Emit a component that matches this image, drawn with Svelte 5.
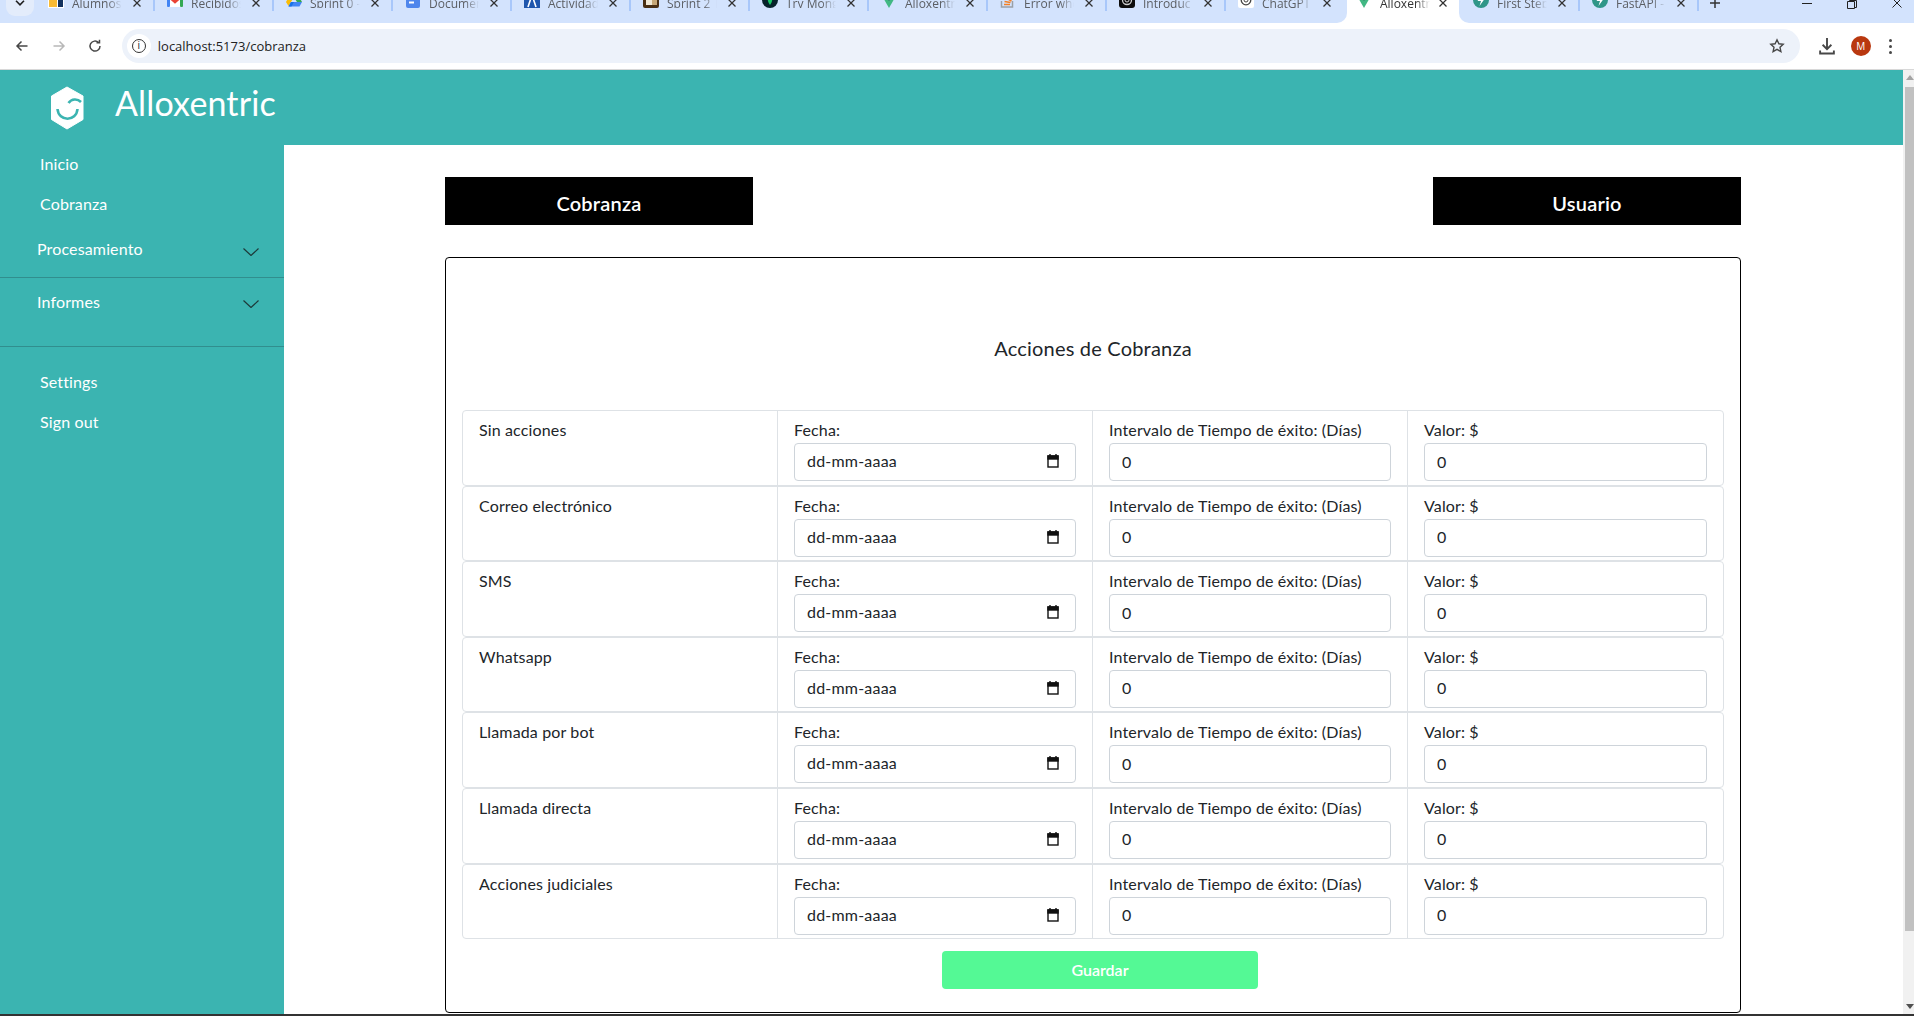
<script lang="ts">
	const tabsBefore = [
		{ title: 'Alumnos', icon: 'sheet' },
		{ title: 'Recibidos', icon: 'gmail' },
		{ title: 'Sprint 0 -', icon: 'drive' },
		{ title: 'Documen', icon: 'docs' },
		{ title: 'Actividad', icon: 'azure' },
		{ title: 'Sprint 2 |', icon: 'photo' },
		{ title: 'Try Mong', icon: 'mongo' },
		{ title: 'Alloxentr', icon: 'vue' },
		{ title: 'Error whe', icon: 'stack' },
		{ title: 'Introduc', icon: 'openai' },
		{ title: 'ChatGPT', icon: 'chatgpt' }
	];
	const tabsAfter = [
		{ title: 'First Step', icon: 'fastapi' },
		{ title: 'FastAPI -', icon: 'fastapi' }
	];
	const acciones = [
		'Sin acciones',
		'Correo electrónico',
		'SMS',
		'Whatsapp',
		'Llamada por bot',
		'Llamada directa',
		'Acciones judiciales'
	];
</script>

<!-- favicons are clipped by the top of the window, only the lower half shows -->
{#snippet favicon(icon: string)}
	<svg class="favicon" viewBox="0 0 16 16">
		{#if icon === 'sheet'}
			<rect width="16" height="16" fill="#fff" />
			<rect x="1" width="8" height="15" fill="#f9bb34" />
			<rect x="10" width="5" height="15" fill="#12325e" />
		{:else if icon === 'gmail'}
			<rect x="1" y="2" width="14" height="13" fill="#fff" />
			<path d="M1 4l7 6 7-6" fill="none" stroke="#ea4335" stroke-width="2.500" />
			<rect x="0" y="3" width="3" height="12" rx="1" fill="#4285f4" />
			<rect x="13" y="3" width="3" height="12" rx="1" fill="#34a853" />
		{:else if icon === 'drive'}
			<path d="M5 1 0 10l2.500 4L8 5z" fill="#fbbc04" />
			<path d="M2.500 14.500h11L16 10H5z" fill="#4285f4" />
			<path d="M5 1h6l5 9h-5z" fill="#34a853" />
			<path d="M2.500 14.500 5 10h3l-2.500 4.500z" fill="#1a73e8" />
		{:else if icon === 'docs'}
			<rect x="1" width="14" height="16" rx="2" fill="#4f86ec" />
			<path d="M4 7h8M4 10.500h5" stroke="#fff" stroke-width="1.800" />
		{:else if icon === 'azure'}
			<rect width="16" height="16" fill="#1f56ad" />
			<path d="M4 15 8 3l4 12" fill="none" stroke="#fff" stroke-width="1.600" />
		{:else if icon === 'photo'}
			<rect width="16" height="16" rx="2" fill="#4a2f14" />
			<rect x="3" width="8" height="13" fill="#f3ead6" />
			<rect x="9" y="8" width="5" height="5" fill="#c8a878" />
		{:else if icon === 'mongo'}
			<circle cx="8" cy="8" r="8" fill="#06232a" />
			<path d="M8 2c3 3 3 7 0 11-3-4-3-8 0-11z" fill="#18c964" />
		{:else if icon === 'vue'}
			<path d="M0 2h16L8 16z" fill="#41b883" />
			<path d="M4 2h8L8 9z" fill="#35495e" />
		{:else if icon === 'stack'}
			<path d="M1.500 9v6h11V9" fill="none" stroke="#9aa0a6" stroke-width="1.500" />
			<path d="M4 12.500h6M4.500 9.500l6 1M6 6l5.500 3" stroke="#f48024" stroke-width="1.500" />
		{:else if icon === 'openai'}
			<rect width="16" height="16" rx="3" fill="#0d0d0d" />
			<circle cx="8" cy="8" r="4.500" fill="none" stroke="#cfcfcf" stroke-width="1.300" />
			<circle cx="8" cy="8" r="2" fill="none" stroke="#cfcfcf" />
		{:else if icon === 'chatgpt'}
			<rect width="16" height="16" rx="2" fill="#fff" />
			<circle cx="8" cy="8" r="4.800" fill="none" stroke="#444" stroke-width="1.300" />
			<circle cx="8" cy="8" r="2" fill="none" stroke="#444" />
		{:else}
			<circle cx="8" cy="8" r="8" fill="#2f9688" />
			<path d="M9.500 2.500 4.500 9H8l-1.500 5L11.500 7H8z" fill="#fff" />
		{/if}
	</svg>
{/snippet}

{#snippet closeIcon()}
	<svg class="tabx" viewBox="0 0 8 8"><path d="M.5.500l7 7M7.500.500l-7 7" /></svg>
{/snippet}

<div class="browser">
	<div class="tabstrip">
		<div class="tabgroup before">
			<span class="chev">
				<svg viewBox="0 0 10 6"><path d="M1 .800l4 4 4-4" /></svg>
			</span>
			{#each tabsBefore as tab}
				<div class="tab">
					{@render favicon(tab.icon)}
					<span class="tabtitle">{tab.title}</span>
					{@render closeIcon()}
				</div>
			{/each}
		</div>
		<div class="tab active">
			{@render favicon('vue')}
			<span class="tabtitle">Alloxentr</span>
			{@render closeIcon()}
		</div>
		<div class="tabgroup after">
			{#each tabsAfter as tab}
				<div class="tab">
					{@render favicon(tab.icon)}
					<span class="tabtitle">{tab.title}</span>
					{@render closeIcon()}
				</div>
			{/each}
			<svg class="plus" viewBox="0 0 10 10"><path d="M5 0v10M0 5h10" /></svg>
			<div class="winctl">
				<svg viewBox="0 0 10 10"><path d="M0 3.500h10" /></svg>
				<svg viewBox="0 0 10 10"><path d="M.5 1.500h7v7h-7zM2.500 1.500v-1h7v7h-2" /></svg>
				<svg viewBox="0 0 10 10"><path d="M.5-1.500l9 9M9.500-1.500l-9 9" /></svg>
			</div>
		</div>
	</div>
	<div class="toolbar">
		<svg class="navicon" viewBox="0 0 16 16"><path d="M13.500 8H3M7.500 3.500 3 8l4.500 4.500" /></svg>
		<svg class="navicon dim" viewBox="0 0 16 16"><path d="M2.500 8H13M8.500 3.500 13 8l-4.500 4.500" /></svg>
		<svg class="navicon" viewBox="0 0 16 16"><path d="M13 8a5 5 0 1 1-1.500-3.500M12.500 1.800v3h-3" /></svg>
		<div class="omnibox">
			<span class="infobg"><span class="info">i</span></span>
			<span class="url">localhost:5173/cobranza</span>
			<svg class="star" viewBox="0 0 16 16"><path d="M8 1.800l1.900 4 4.300.500-3.200 3 .9 4.300L8 11.400l-3.900 2.200.9-4.300-3.200-3 4.300-.5z" /></svg>
		</div>
		<svg class="navicon dl" viewBox="0 0 16 16"><path d="M8 1.500v9M4.500 7 8 10.500 11.500 7M2.500 11.500v2.500h11v-2.500" /></svg>
		<span class="avatar">M</span>
		<span class="dots"><i></i><i></i><i></i></span>
	</div>
</div>

<div class="page">
	<div class="app">
		<header class="topbar">
			<svg class="logo" viewBox="0 0 34 44">
				<path class="hex" d="M16.500 1 32.500 10v23.500L16.500 43 1 33.500V10z" />
				<path class="smile" d="M7 23c1 13 19 13 20 0" />
				<path class="wink" d="M18 17c3-4.500 9-4.500 12.500-1" />
			</svg>
			<span class="brand">Alloxentric</span>
		</header>
		<div class="body">
			<aside class="sidebar">
				<a class="navlink" href="#inicio">Inicio</a>
				<a class="navlink" href="#cobranza">Cobranza</a>
				<div class="group first">
					<span>Procesamiento</span>
					<svg class="caret" viewBox="0 0 16 8"><path d="M.5.500 8 7.500 15.500.500" /></svg>
				</div>
				<div class="group second">
					<span>Informes</span>
					<svg class="caret" viewBox="0 0 16 8"><path d="M.5.500 8 7.500 15.500.500" /></svg>
				</div>
				<a class="navlink settings" href="#settings">Settings</a>
				<a class="navlink" href="#signout">Sign out</a>
			</aside>
			<main class="content">
				<div class="tabsrow">
					<button class="blackbtn">Cobranza</button>
					<button class="blackbtn">Usuario</button>
				</div>
				<section class="card">
					<h2>Acciones de Cobranza</h2>
					<div class="rows">
						{#each acciones as accion}
							<div class="row">
								<div class="cell">{accion}</div>
								<div class="cell">
									<div class="lbl">Fecha:</div>
									<div class="field date">
										<span>dd-mm-aaaa</span>
										<svg class="cal" viewBox="0 0 12 14"><path d="M3 0v2M9 0v2" /><rect x="1" y="2" width="10" height="11" /><rect class="calhead" x="1" y="2" width="10" height="3" /></svg>
									</div>
								</div>
								<div class="cell">
									<div class="lbl">Intervalo de Tiempo de éxito: (Días)</div>
									<input class="field" type="number" value="0" />
								</div>
								<div class="cell">
									<div class="lbl">Valor: $</div>
									<input class="field" type="number" value="0" />
								</div>
							</div>
						{/each}
					</div>
					<button class="save">Guardar</button>
				</section>
			</main>
		</div>
	</div>
	<div class="scrollbar">
		<span class="arrow up"></span>
		<span class="thumb"></span>
		<span class="arrow down"></span>
	</div>
</div>

<style>
	:global(body) {
		margin: 0;
		height: 1016px;
		overflow: hidden;
		font-family: 'Lato', 'Noto Sans', sans-serif;
		letter-spacing: 0.14px;
		background: #fff;
	}

	/* browser chrome */
	.browser {
		font-family: 'Open Sans', 'Liberation Sans', sans-serif;
		letter-spacing: 0;
		height: 70px;
		box-sizing: border-box;
		border-bottom: 1px solid #d8d8d8;
		background: #fff;
	}
	.tabstrip {
		display: flex;
		height: 23px;
		overflow: hidden;
	}
	.tabgroup {
		display: flex;
		background: #d3e3fd;
		height: 23px;
	}
	.tabgroup.before {
		width: 1347px;
		flex: none;
		border-bottom-right-radius: 10px;
	}
	.tabgroup.after {
		flex: 1;
		border-bottom-left-radius: 10px;
		padding-left: 2px;
	}
	.chev {
		width: 28px;
		height: 16px;
		flex: none;
		background: #e3ecfb;
		border-radius: 0 0 9px 9px;
		margin: 0 2px 0 6px;
		display: flex;
		justify-content: center;
	}
	.chev svg {
		width: 10px;
		height: 6px;
		fill: none;
		stroke: #1f1f1f;
		stroke-width: 1.600;
		margin-top: 0;
	}
	.tab {
		width: 119px;
		height: 11px;
		flex: none;
		box-sizing: border-box;
		display: flex;
		align-items: flex-start;
		padding-left: 12px;
		font-size: 12px;
		line-height: 8px;
		color: #5b5e63;
		border-right: 2px solid #a8c7fa;
	}
	.tabgroup.before .tab:last-child {
		border-right: 0;
	}
	.tab.active {
		width: 112px;
		height: 23px;
		background: #fff;
		border: 0;
		color: #333;
		padding-left: 9px;
	}
	.tab.active .tabx {
		margin-left: 9px;
	}
	.favicon {
		width: 16px;
		height: 16px;
		margin-top: -8px;
		flex: none;
	}
	.tabtitle {
		width: 50px;
		margin-left: 8px;
		flex: none;
		overflow: hidden;
		white-space: nowrap;
		mask-image: linear-gradient(to right, #000 72%, transparent);
	}
	.tabx {
		width: 8px;
		height: 8px;
		flex: none;
		margin: -1px 0 0 11px;
		fill: none;
		stroke: #333;
		stroke-width: 1.300;
	}
	.plus {
		width: 10px;
		height: 10px;
		flex: none;
		margin: -2px 0 0 11px;
		fill: none;
		stroke: #333;
		stroke-width: 1.500;
	}
	.winctl {
		margin-left: auto;
		display: flex;
		gap: 35px;
		margin-right: 12px;
	}
	.winctl svg {
		width: 10px;
		height: 10px;
		fill: none;
		stroke: #222;
		stroke-width: 1;
		overflow: visible;
	}
	.toolbar {
		height: 46px;
		display: flex;
		align-items: center;
		padding-left: 14px;
	}
	.navicon {
		width: 16px;
		height: 16px;
		margin-right: 20.600px;
		fill: none;
		stroke: #474747;
		stroke-width: 1.500;
	}
	.navicon.dim {
		stroke: #b8b8b8;
	}
	.navicon.dl {
		margin: 0 0 0 17px;
		width: 20px;
		height: 20px;
	}
	.omnibox {
		width: 1678px;
		margin-left: -2px;
		height: 34px;
		flex: none;
		background: #edf2fa;
		border-radius: 17px;
		display: flex;
		align-items: center;
		box-sizing: border-box;
		padding: 0 15px 0 5px;
		font-size: 13px;
		color: #222;
	}
	.infobg {
		width: 24px;
		height: 24px;
		border-radius: 50%;
		background: #fff;
		display: flex;
		align-items: center;
		justify-content: center;
		margin-right: 7px;
	}
	.info {
		width: 14px;
		height: 14px;
		border: 1.500px solid #333;
		border-radius: 50%;
		box-sizing: border-box;
		font-size: 10px;
		line-height: 11px;
		text-align: center;
	}
	.url {
		flex: 1;
	}
	.star {
		width: 16px;
		height: 16px;
		fill: none;
		stroke: #474747;
		stroke-width: 1.400;
	}
	.avatar {
		width: 20px;
		height: 20px;
		border-radius: 50%;
		background: #b9380f;
		color: #fff;
		font-size: 10px;
		line-height: 20px;
		text-align: center;
		margin-left: 14px;
	}
	.dots {
		display: flex;
		flex-direction: column;
		gap: 3px;
		margin-left: 18px;
	}
	.dots i {
		width: 3px;
		height: 3px;
		border-radius: 50%;
		background: #474747;
	}

	/* app */
	.page {
		height: 946px;
		display: flex;
		border-bottom: 2px solid #333;
		box-sizing: border-box;
		overflow: hidden;
	}
	.app {
		flex: 1;
		min-width: 0;
		display: flex;
		flex-direction: column;
		background: #3bb4b1;
	}
	.topbar {
		height: 75px;
		flex: none;
		display: flex;
		align-items: flex-start;
		color: #fff;
		box-sizing: border-box;
		padding: 16px 0 0 50px;
	}
	.logo {
		width: 35px;
		height: 44px;
		flex: none;
	}
	.hex {
		fill: #fff;
		stroke: #fff;
		stroke-linejoin: round;
	}
	.smile,
	.wink {
		fill: none;
		stroke: #3bb4b1;
		stroke-width: 2.600;
	}
	.brand {
		font-size: 34px;
		font-weight: 400;
		line-height: 38px;
		margin-left: 30px;
		margin-top: -2px;
	}
	.body {
		flex: 1;
		display: flex;
		min-height: 0;
	}
	.sidebar {
		width: 284px;
		flex: none;
		display: flex;
		flex-direction: column;
		color: #fff;
		font-size: 16px;
		margin-top: -1px;
	}
	.navlink {
		color: #fff;
		text-decoration: none;
		height: 40px;
		line-height: 40px;
		padding-left: 40px;
	}
	.group {
		display: flex;
		justify-content: space-between;
		align-items: center;
		padding: 0 25px 0 37px;
		box-sizing: border-box;
		border-bottom: 1px solid #318e8e;
	}
	.group span {
		position: relative;
		top: -2px;
	}
	.group.first {
		height: 54px;
		padding-top: 2px;
	}
	.group.first span {
		top: -3px;
	}
	.group.second {
		height: 69px;
		padding-bottom: 17px;
	}
	.navlink.settings {
		margin-top: 15px;
	}
	.caret {
		width: 16px;
		height: 8px;
		fill: none;
		stroke: #1d3a3a;
		stroke-width: 1.200;
	}
	.content {
		flex: 1;
		background: #fff;
		padding: 32px 0 0 161px;
		min-width: 0;
	}
	.tabsrow {
		width: 1296px;
		display: flex;
		justify-content: space-between;
	}
	.blackbtn {
		width: 308px;
		height: 48px;
		background: #000;
		color: #fff;
		border: 0;
		padding-top: 4px;
		font: 600 20px 'Lato', sans-serif;
		letter-spacing: 0.2px;
	}
	.card {
		width: 1296px;
		height: 756px;
		margin-top: 32px;
		box-sizing: border-box;
		border: 1.500px solid #000;
		border-radius: 4px;
		padding: 0 16px;
		display: flex;
		flex-direction: column;
	}
	h2 {
		margin: 0;
		height: 152px;
		padding-top: 75px;
		box-sizing: border-box;
		font-size: 20px;
		font-weight: 400;
		line-height: 30px;
		text-align: center;
		color: #212529;
		letter-spacing: 0.2px;
	}
	.rows {
		display: flex;
		flex-direction: column;
	}
	.row {
		display: grid;
		grid-template-columns: repeat(4, 1fr);
		height: 75.600px;
		box-sizing: border-box;
		border: 1px solid #dee2e6;
		border-radius: 4px;
	}
	.cell {
		padding: 7px 16px 0;
		border-right: 1px solid #dee2e6;
		font-size: 16px;
		line-height: 24px;
		color: #212529;
		min-width: 0;
	}
	.cell:last-child {
		border-right: 0;
	}
	.lbl {
		height: 25px;
	}
	.field {
		display: block;
		width: 100%;
		height: 38px;
		box-sizing: border-box;
		border: 1px solid #ced4da;
		border-radius: 4px;
		padding: 5px 12px 7px;
		font: 16px/24px 'Lato', sans-serif;
		letter-spacing: 0.2px;
		color: #212529;
		background: #fff;
	}
	.date {
		display: flex;
		justify-content: space-between;
		align-items: center;
	}
	.cal {
		width: 12px;
		height: 14px;
		fill: none;
		stroke: #111;
		stroke-width: 1.400;
		margin-right: 4px;
	}
	.calhead {
		fill: #111;
	}
	.save {
		width: 316px;
		height: 38px;
		margin: 12px 0 0 480px;
		background: #54f995;
		color: #fff;
		border: 0;
		border-radius: 4px;
		padding-bottom: 3px;
		font: 600 16px 'Lato', sans-serif;
	}
	.scrollbar {
		width: 11px;
		flex: none;
		background: #f1f1f1;
		position: relative;
	}
	.thumb {
		position: absolute;
		top: 17px;
		left: 2px;
		right: 0;
		height: 844px;
		background: #c1c1c1;
	}
	.arrow {
		position: absolute;
		left: 3px;
		border-left: 4px solid transparent;
		border-right: 4px solid transparent;
	}
	.arrow.up {
		top: 5px;
		border-bottom: 5px solid #a3a3a3;
	}
	.arrow.down {
		bottom: 5px;
		border-top: 5px solid #505050;
	}
</style>
